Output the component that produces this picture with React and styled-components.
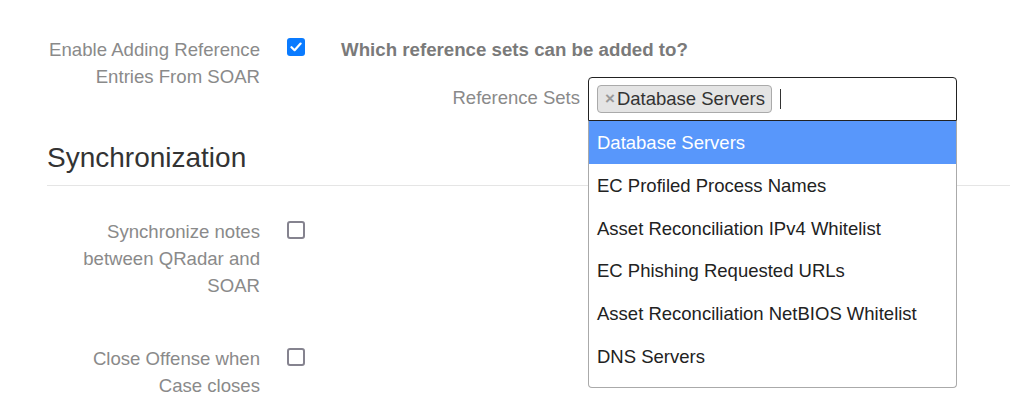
import React from "react";
import styled, { createGlobalStyle } from "styled-components";

const GlobalStyle = createGlobalStyle`
  body {
    margin: 0;
    background: #fff;
    font-family: "Liberation Sans", Arial, Helvetica, sans-serif;
  }
`;

const Page = styled.div`
  width: 1010px;
  height: 406px;
  overflow: hidden;
  padding-left: 47px;
  box-sizing: border-box;
`;

const FormRow = styled.div`
  display: grid;
  grid-template-columns: 213px 18px 1fr;
  column-gap: 27px;
  align-items: start;
  margin-top: ${(p) => p.$top}px;
`;

const Label = styled.div`
  font-size: 18.6px;
  line-height: 27px;
  color: #8a8a8a;
  text-align: right;
  white-space: nowrap;
`;

const Box = styled.span`
  display: flex;
  align-items: center;
  justify-content: center;
  width: 18px;
  height: 18px;
  margin-top: ${(p) => (p.$checked ? 2 : 3)}px;
  box-sizing: border-box;
  border-radius: 3px;
  background: ${(p) => (p.$checked ? "#0a7bff" : "#fff")};
  border: ${(p) => (p.$checked ? "none" : "2px solid #85838f")};
`;

const Checkbox = ({ checked }) => (
  <Box $checked={checked}>
    {checked && (
      <svg width="12" height="10" viewBox="0 0 12 10">
        <path
          d="M1.5 5.2 L4.6 8.2 L10.6 1.6"
          fill="none"
          stroke="#fff"
          strokeWidth="2.2"
          strokeLinecap="round"
          strokeLinejoin="round"
        />
      </svg>
    )}
  </Box>
);

const Detail = styled.div`
  margin-left: 9px;
  display: flex;
  flex-direction: column;
`;

const Question = styled.div`
  font-size: 18.7px;
  font-weight: bold;
  line-height: 27px;
  color: #7a7a7a;
`;

const PickerRow = styled.div`
  display: flex;
  align-items: center;
  gap: 8px;
  margin-top: 14px;
`;

const PickerLabel = styled.div`
  width: 239px;
  text-align: right;
  font-size: 18.5px;
  color: #8a8a8a;
  margin-top: -3px;
`;

const Picker = styled.div`
  position: relative;
  width: 369px;
`;

const SelectBox = styled.div`
  display: flex;
  align-items: center;
  gap: 8px;
  height: 44px;
  box-sizing: border-box;
  padding: 0 8px;
  border: 1px solid #222;
  border-radius: 4px 4px 0 0;
  background: #fff;
`;

const Tag = styled.span`
  display: inline-flex;
  align-items: center;
  height: 28px;
  box-sizing: border-box;
  padding: 0 6px 0 7px;
  background: #e4e4e4;
  border: 1px solid #aaa;
  border-radius: 4px;
  font-size: 18.5px;
  color: #333;
`;

const Remove = styled.span`
  font-size: 17px;
  color: #999;
  font-weight: bold;
  margin-right: 2px;
`;

const Caret = styled.span`
  width: 1px;
  height: 20px;
  background: #333;
`;

const Dropdown = styled.ul`
  position: absolute;
  top: 100%;
  left: 0;
  width: 100%;
  height: 267px;
  box-sizing: border-box;
  margin: 0;
  padding: 0;
  list-style: none;
  background: #fff;
  border: 1px solid #aaa;
  border-top: none;
  border-radius: 0 0 4px 4px;
  overflow: hidden;
`;

const Option = styled.li`
  padding: 12px 8px 10px;
  font-size: 18.5px;
  line-height: 20.8px;
  color: ${(p) => (p.$active ? "#fff" : "#222")};
  background: ${(p) => (p.$active ? "#5897fb" : "transparent")};
`;

const SectionTitle = styled.h2`
  margin: 22px 0 0;
  padding-bottom: 12px;
  border-bottom: 1px solid #e5e5e5;
  font-size: 28px;
  font-weight: normal;
  line-height: 30px;
  color: #333;
`;

const options = [
  "Database Servers",
  "EC Profiled Process Names",
  "Asset Reconciliation IPv4 Whitelist",
  "EC Phishing Requested URLs",
  "Asset Reconciliation NetBIOS Whitelist",
  "DNS Servers",
];

export default function App() {
  return (
    <>
      <GlobalStyle />
      <Page>
        <FormRow $top={36}>
          <Label>
            Enable Adding Reference
            <br />
            Entries From SOAR
          </Label>
          <Checkbox checked />
          <Detail>
            <Question>Which reference sets can be added to?</Question>
            <PickerRow>
              <PickerLabel>Reference Sets</PickerLabel>
              <Picker>
                <SelectBox>
                  <Tag>
                    <Remove>×</Remove>Database Servers
                  </Tag>
                  <Caret />
                </SelectBox>
                <Dropdown>
                  {options.map((o, i) => (
                    <Option key={o} $active={i === 0}>
                      {o}
                    </Option>
                  ))}
                </Dropdown>
              </Picker>
            </PickerRow>
          </Detail>
        </FormRow>

        <SectionTitle>Synchronization</SectionTitle>

        <FormRow $top={32}>
          <Label>
            Synchronize notes
            <br />
            between QRadar and
            <br />
            SOAR
          </Label>
          <Checkbox />
        </FormRow>

        <FormRow $top={46}>
          <Label>
            Close Offense when
            <br />
            Case closes
          </Label>
          <Checkbox />
        </FormRow>
      </Page>
    </>
  );
}
